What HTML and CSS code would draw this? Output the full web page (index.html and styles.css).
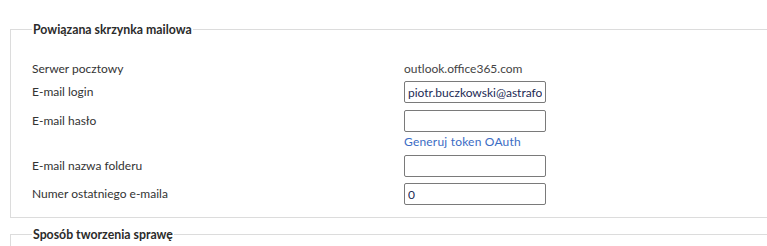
FILE: index.html
```html
<!DOCTYPE html>
<html lang="pl">
<head>
<meta charset="utf-8">
<title>Powiązana skrzynka mailowa</title>
<link rel="stylesheet" href="styles.css">
</head>
<body>
<div class="page">
  <fieldset class="group">
    <legend class="group-title">Powiązana skrzynka mailowa</legend>
    <div class="rows">
      <div class="row row-server">
        <span class="label">Serwer pocztowy</span>
        <span class="value">outlook.office365.com</span>
      </div>
      <div class="row row-login">
        <span class="label">E-mail login</span>
        <input class="field" type="text" value="piotr.buczkowski@astrafox.pl">
      </div>
      <div class="row row-pass">
        <span class="label">E-mail hasło</span>
        <div class="stack">
          <input class="field" type="text" value="">
          <a class="link" href="#">Generuj token OAuth</a>
        </div>
      </div>
      <div class="row row-folder">
        <span class="label">E-mail nazwa folderu</span>
        <input class="field" type="text" value="">
      </div>
      <div class="row row-last">
        <span class="label">Numer ostatniego e-maila</span>
        <input class="field" type="text" value="0">
      </div>
    </div>
  </fieldset>
  <fieldset class="group group-second">
    <legend class="group-title">Sposób tworzenia sprawę</legend>
    <div class="rows"></div>
  </fieldset>
</div>
</body>
</html>
```
FILE: styles.css
```css
html, body {
  margin: 0;
  padding: 0;
  overflow: hidden;
  background: #ffffff;
}
body {
  font-family: Lato, "Open Sans", "Liberation Sans", sans-serif;
  font-size: 12px;
  color: #333333;
}
.page {
  padding: 21px 0 0 10px;
}
.group {
  margin: 0 -40px 0 0;
  border: 1px solid #dcdcdc;
  padding: 0 0 12px 21px;
}
.group-second {
  margin-top: 8px;
  padding-bottom: 40px;
}
.group-title {
  padding: 0 1px;
  font-weight: bold;
  font-size: 12.3px;
  line-height: 17px;
  color: #2b2b2b;
}
.rows {
  display: flex;
  flex-direction: column;
}
.row {
  display: grid;
  grid-template-columns: 372px 1fr;
  align-items: start;
}
.label, .value {
  line-height: 16px;
}
.row-server { margin-top: 23px; }
.row-login { margin-top: 4px; }
.row-pass { margin-top: 7px; }
.row-folder { margin-top: 4px; }
.row-last { margin-top: 6px; }
.row-login .label, .row-pass .label, .row-folder .label, .row-last .label {
  padding-top: 3px;
}
.value {
  color: #444444;
}
.stack {
  display: flex;
  flex-direction: column;
  align-items: flex-start;
}
.field {
  box-sizing: border-box;
  width: 142px;
  height: 22px;
  margin: 0;
  padding: 0 3px;
  border: 1px solid #7a7a7a;
  border-radius: 2px;
  font-family: inherit;
  font-size: 12px;
  color: #1c2a55;
  background: #ffffff;
}
.link {
  margin-top: 1px;
  line-height: 18px;
  color: #3b6cc4;
  text-decoration: none;
  letter-spacing: 0.2px;
}
```
